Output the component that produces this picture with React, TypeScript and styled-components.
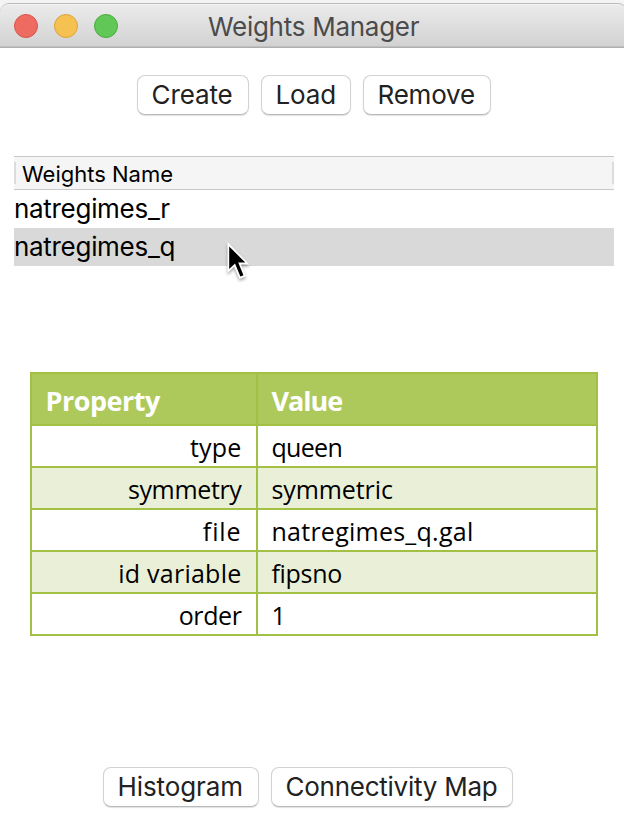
import React from "react";
import styled, { createGlobalStyle } from "styled-components";

const GlobalStyle = createGlobalStyle`
  * { box-sizing: border-box; }
  body { margin: 0; background: #fff; overflow: hidden; }
`;

const Window = styled.main`
  width: 624px;
  height: 828px;
  display: flex;
  flex-direction: column;
  background: #fff;
  color: #000;
  font-family: Inter, "Liberation Sans", sans-serif;
  font-size: 26px;
  white-space: nowrap;
`;

const TitleFrame = styled.div`
  height: 48px;
  padding-top: 3px;
  background: linear-gradient(#f4f4f4 0 20px, #d2d2d2 20px);
`;

const TitleBar = styled.header`
  width: 627px;
  height: 45px;
  display: grid;
  grid-template-columns: 14px 194px 1fr;
  align-items: center;
  border: 1px solid #b9b9b9;
  border-width: 1px 0 0;
  border-radius: 9px 9px 0 0;
  background: linear-gradient(#f6f6f6 0 1px, #ebebeb 1px, #d2d2d2 42px, #aeaeae 43px);
`;

const Lights = styled.div`
  grid-column: 2;
  display: flex;
  gap: 16px;
`;

const Light = styled.span<{ $fill: string; $edge: string }>`
  width: 24px;
  height: 24px;
  border-radius: 50%;
  background: ${(p) => p.$fill};
  border: 1px solid ${(p) => p.$edge};
`;

const Title = styled.h1`
  margin: 0;
  padding-top: 2px;
  font-size: 26px;
  line-height: 32px;
  font-weight: 400;
  color: #4b4b4b;
`;

const Label = styled.span<{ $track?: number }>`
  letter-spacing: ${(p) => p.$track ?? 0}px;
`;

const ButtonRow = styled.div<{ $inset: number; $top: number }>`
  display: flex;
  gap: 12px;
  padding-left: ${(p) => p.$inset}px;
  margin-top: ${(p) => p.$top}px;
`;

const PushButton = styled.button<{ $width: number }>`
  width: ${(p) => p.$width}px;
  height: 40px;
  padding: 0 0 1px 13.5px;
  text-align: left;
  border: 1px solid #d2d2d2;
  border-bottom-color: #bababa;
  border-radius: 8px;
  background: #fff;
  box-shadow: 0 1px 1px rgba(0, 0, 0, 0.12);
  color: #222;
  font: 400 26px/32px Inter, "Liberation Sans", sans-serif;
`;

const List = styled.section`
  position: relative;
  width: 600px;
  margin: 41px 0 0 14px;
`;

const ListHeader = styled.div`
  height: 34px;
  padding: 5px 0 6px;
  border: solid #c9c9c9;
  border-width: 1px 0;
  background: #f5f5f5;
`;

const ColumnName = styled.div`
  height: 22px;
  padding-left: 6px;
  border: solid #dcdcdc;
  border-width: 0 2px;
  font-size: 22px;
  line-height: 25px;
`;

const ListRow = styled.div<{ $selected?: boolean }>`
  height: 38px;
  line-height: 38px;
  background: ${(p) => (p.$selected ? "#d9d9d9" : "#fff")};
`;

const Pointer = styled.svg`
  position: absolute;
  left: 208px;
  top: 83px;
  width: 34px;
  height: 46px;
  overflow: visible;
  filter: drop-shadow(0 2px 1.5px rgba(0, 0, 0, 0.35));
`;

const PropertyTable = styled.table`
  width: 568px;
  margin: 106px 0 0 30px;
  border-collapse: separate;
  border-spacing: 0;
  table-layout: fixed;
  border: solid #a1c044;
  border-width: 2px 0 0 2px;
  font-family: "Open Sans", "Noto Sans", sans-serif;
`;

const HeadCell = styled.th`
  height: 52px;
  padding: 3px 14px 0 13.5px;
  border: solid #a1c044;
  border-width: 0 2px 2px 0;
  background: #aec95b;
  color: #fff;
  text-align: left;
  font-size: 27px;
  line-height: 34px;
  font-weight: 700;
  &:first-child { width: 226px; }
`;

const PropertyRow = styled.tr`
  background: #fff;
  &:nth-child(even) { background: #eaf0d7; }
`;

const Cell = styled.td<{ $end?: boolean }>`
  height: 42px;
  padding: 1px 14.5px 0 13.5px;
  border: solid #a1c044;
  border-width: 0 2px 2px 0;
  text-align: ${(p) => (p.$end ? "right" : "left")};
  font-size: 25px;
  line-height: 34px;
  font-weight: 500;
`;

const properties: { name: string; value: string; nameTrack: number; valueTrack: number }[] = [
  { name: "type", value: "queen", nameTrack: 0.2, valueTrack: -0.7 },
  { name: "symmetry", value: "symmetric", nameTrack: -0.35, valueTrack: -0.1 },
  { name: "file", value: "natregimes_q.gal", nameTrack: 0.9, valueTrack: 0.25 },
  { name: "id variable", value: "fipsno", nameTrack: 0.25, valueTrack: -0.3 },
  { name: "order", value: "1", nameTrack: -0.4, valueTrack: 0 },
];

export default function App() {
  return (
    <>
      <GlobalStyle />
      <Window>
        <TitleFrame>
          <TitleBar>
            <Lights>
              <Light $fill="#ed6b60" $edge="#d9544c" />
              <Light $fill="#f5c151" $edge="#dba33c" />
              <Light $fill="#61c756" $edge="#48ad3c" />
            </Lights>
            <Title><Label $track={-0.27}>Weights Manager</Label></Title>
          </TitleBar>
        </TitleFrame>
        <ButtonRow $inset={137} $top={27}>
          <PushButton $width={112}><Label $track={-0.1}>Create</Label></PushButton>
          <PushButton $width={90}><Label $track={-0.1}>Load</Label></PushButton>
          <PushButton $width={128}><Label $track={-0.2}>Remove</Label></PushButton>
        </ButtonRow>
        <List>
          <ListHeader>
            <ColumnName><Label>Weights Name</Label></ColumnName>
          </ListHeader>
          <ListRow><Label $track={-0.3}>natregimes_r</Label></ListRow>
          <ListRow $selected><Label $track={-0.3}>natregimes_q</Label></ListRow>
          <Pointer viewBox="0 0 34 46">
            <path d="M5.5 3V34L12.2 27.8L17.5 40L24 37.3L18.8 25.5H27.5Z" fill="#fff" />
            <path d="M7.2 7.4V30L13 24.6L18.4 37.6L21.5 36.2L16.2 23.5H23.3Z" fill="#000" />
          </Pointer>
        </List>
        <PropertyTable>
          <thead>
            <tr>
              <HeadCell><Label $track={-0.5}>Property</Label></HeadCell>
              <HeadCell><Label $track={-1}>Value</Label></HeadCell>
            </tr>
          </thead>
          <tbody>
            {properties.map((p) => (
              <PropertyRow key={p.name}>
                <Cell $end><Label $track={p.nameTrack}>{p.name}</Label></Cell>
                <Cell><Label $track={p.valueTrack}>{p.value}</Label></Cell>
              </PropertyRow>
            ))}
          </tbody>
        </PropertyTable>
        <ButtonRow $inset={103} $top={131}>
          <PushButton $width={156}><Label $track={-0.1}>Histogram</Label></PushButton>
          <PushButton $width={242}><Label $track={-0.25}>Connectivity Map</Label></PushButton>
        </ButtonRow>
      </Window>
    </>
  );
}
